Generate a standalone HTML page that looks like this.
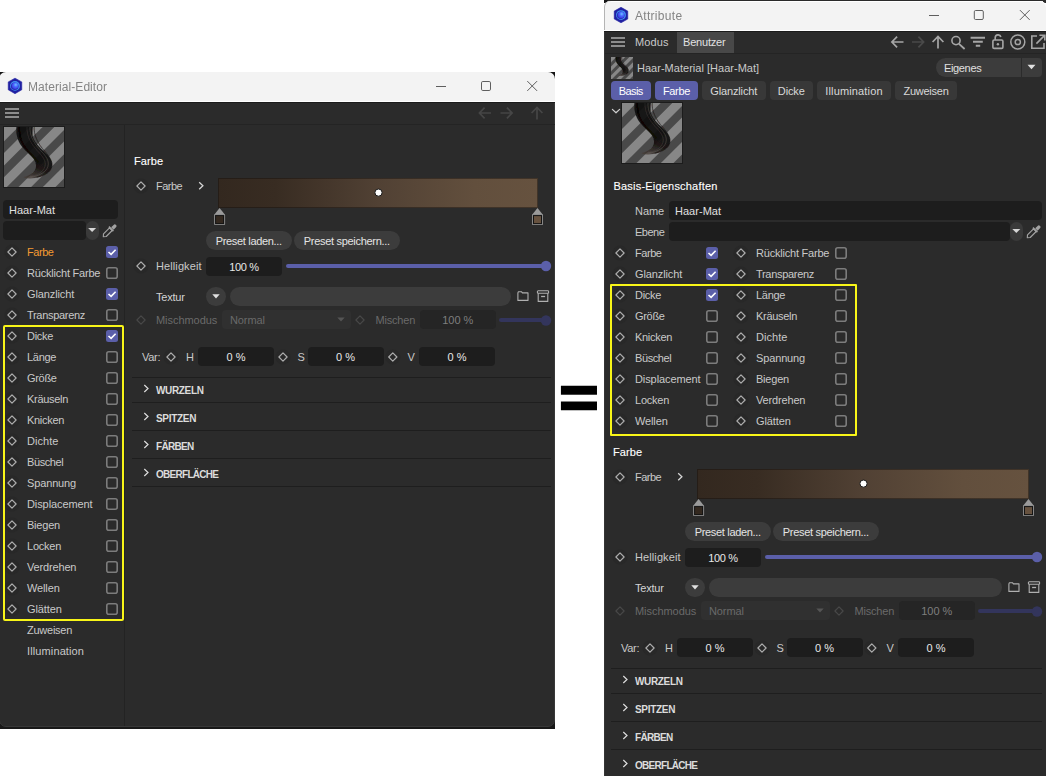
<!DOCTYPE html>
<html lang="de"><head><meta charset="utf-8"><title>Material-Editor = Attribute</title>
<style>
html,body{margin:0;padding:0;background:#fff;}
body{width:1046px;height:776px;position:relative;overflow:hidden;font-family:"Liberation Sans",sans-serif;}
#stage{position:absolute;left:0;top:0;width:1046px;height:776px;overflow:hidden;background:#fff;}
#stage div,#stage svg{position:absolute;display:block;}
.t{white-space:nowrap;}
</style></head><body><div id="stage">
<div style="left:0px;top:72px;width:555px;height:8px;background:#141414;"></div>
<div style="left:0px;top:720px;width:555px;height:9px;background:#181818;"></div>
<div style="left:554px;top:80px;width:1px;height:645px;background:#1c1c1c;"></div>
<div style="left:-1px;top:72px;width:556px;height:655px;background:#2b2b2b;border-radius:7px;box-sizing:border-box;border:1px solid #383838;"></div>
<div style="left:-1px;top:72px;width:556px;height:30px;background:#f3f3f3;border-radius:7px 7px 0 0;"></div>
<svg style="left:7px;top:77px;" width="16" height="18" viewBox="0 0 16 18"><g transform="translate(0 0.4)"><defs><radialGradient id="aga" cx="0.6" cy="0.35" r="0.7"><stop offset="0" stop-color="#6ec4ff"/><stop offset="0.45" stop-color="#4a68ff"/><stop offset="1" stop-color="#3a36e0"/></radialGradient></defs>
<path d="M8 0.75 L14.75 4.55 L14.75 12.45 L8 16.25 L1.25 12.45 L1.25 4.55 Z" fill="#2020a2" stroke="#2020a2" stroke-width="0.6" stroke-linejoin="round"/>
<circle cx="8" cy="8.5" r="4.9" fill="#3f93f2"/>
<circle cx="7.7" cy="8.8" r="3.8" fill="#2a2cb4"/>
<circle cx="8.1" cy="8.4" r="3.2" fill="url(#aga)"/></g></svg>
<div class="t" style="left:28px;top:77.5px;height:18px;line-height:18px;font-size:12px;color:#848484;letter-spacing:0.07px;will-change:transform;">Material-Editor</div>
<div style="left:436px;top:86px;width:10px;height:1px;background:#5e5e5e;"></div>
<svg style="left:480px;top:80px;" width="12" height="12" viewBox="0 0 12 12"><rect x="1.5" y="1.5" width="9" height="9" rx="1.3" fill="none" stroke="#5e5e5e" stroke-width="1"/></svg>
<svg style="left:526px;top:80px;" width="13" height="12" viewBox="0 0 13 12"><g transform="translate(0.2 0)"><path d="M1.1 1.1 L10.9 10.9 M10.9 1.1 L1.1 10.9" fill="none" stroke="#5e5e5e" stroke-width="1"/></g></svg>
<div style="left:0px;top:101px;width:554.5px;height:1px;background:#ffffff;"></div>
<div style="left:0px;top:102px;width:554.5px;height:1px;background:#1b1b1b;"></div>
<div style="left:0px;top:124px;width:554.5px;height:1px;background:#242424;"></div>
<div style="left:5px;top:108px;width:14px;height:2px;background:#8c8c8c;"></div>
<div style="left:5px;top:112px;width:14px;height:2px;background:#8c8c8c;"></div>
<div style="left:5px;top:116px;width:14px;height:2px;background:#8c8c8c;"></div>
<svg style="left:478px;top:106px;" width="14" height="14" viewBox="0 0 14 14"><path d="M13 7 H1.8 M6.6 1.6 L1.4 7 L6.6 12.4" fill="none" stroke="#464646" stroke-width="1.7" stroke-linejoin="miter"/></svg>
<svg style="left:499px;top:106px;" width="15" height="14" viewBox="0 0 15 14"><g transform="translate(0.5 0)"><path d="M1 7 H12.2 M7.4 1.6 L12.6 7 L7.4 12.4" fill="none" stroke="#464646" stroke-width="1.7" stroke-linejoin="miter"/></g></svg>
<svg style="left:530px;top:106px;" width="14" height="14" viewBox="0 0 14 14"><path d="M7 13.5 V2 M1.6 7 L7 1.4 L12.4 7" fill="none" stroke="#464646" stroke-width="1.7" stroke-linejoin="miter"/></svg>
<div style="left:124px;top:125px;width:1px;height:601px;background:#232323;"></div>
<svg style="left:3px;top:126px;" width="62" height="62" viewBox="0 0 62 62"><defs><clipPath id="cpa"><rect x="1" y="1" width="60" height="60"/></clipPath>
<linearGradient id="hga" gradientUnits="userSpaceOnUse" x1="40" y1="22" x2="24" y2="53"><stop offset="0" stop-color="#0e0c0b" stop-opacity="0.92"/><stop offset="0.55" stop-color="#14110f" stop-opacity="0.92"/><stop offset="0.8" stop-color="#2a221e" stop-opacity="0.82"/><stop offset="1" stop-color="#4a3e37" stop-opacity="0.62"/></linearGradient>
<filter id="bla" x="-10%" y="-10%" width="120%" height="120%"><feGaussianBlur stdDeviation="0.45"/></filter></defs>
<rect width="62" height="62" fill="#1c1c1c"/>
<g clip-path="url(#cpa)"><g transform="translate(1 1) scale(1.0)">
<rect width="60" height="60" fill="#878787"/>
<g fill="#4a4a4a" filter="url(#bla)"><path d="M14.3 0 L26.0 0 L0 26.0 L0 14.3 Z"/><path d="M38.6 0 L50.3 0 L0 50.3 L0 38.6 Z"/><path d="M62.900000000000006 0 L74.6 0 L0 74.6 L0 62.900000000000006 Z"/><path d="M87.2 0 L98.9 0 L0 98.9 L0 87.2 Z"/><path d="M111.5 0 L123.2 0 L0 123.2 L0 111.5 Z"/><path d="M135.8 0 L147.5 0 L0 147.5 L0 135.8 Z"/></g>
<g filter="url(#bla)">
<path d="M12.4 -1 C 11.8 7, 13.3 14, 18.3 20 C 22.3 25, 27.8 28.5, 30.3 33 C 32.3 36.5, 32.8 40, 30.8 43.3 C 28.3 46.8, 24.3 49.3, 19.3 50.2 C 23 51.8, 27 51.9, 31 51.1 C 37 49.9, 43 47, 46.3 43 C 49.3 38.5, 48.3 34, 44.8 29.5 C 40.5 24.5, 33 19, 29.5 12 C 28.2 8.5, 28.2 4, 29 -1 Z" fill="url(#hga)"/>
<g fill="none" stroke-linecap="round">
<path d="M26 -1 C 25 10, 31.5 18.5, 38.5 25.5 C 43.5 31, 46 36, 43 41.5 C 40.5 46, 34 49, 27 50.3" stroke="#8a8580" stroke-width="0.55" opacity="0.5"/>
<path d="M23 -1 C 22 10, 28.5 19, 35.5 26 C 40.5 31.5, 43 36.5, 40 41.5 C 37.5 46, 32 48.6, 26 49.8" stroke="#6e6965" stroke-width="0.5" opacity="0.45"/>
<path d="M30.2 -1 C 29.3 8, 34 17, 41 24.5 C 46.5 31, 49.8 36, 47 42 C 44.5 46.5, 39 49, 33 50.2" stroke="#161210" stroke-width="0.8" opacity="0.8"/>
<path d="M15.5 -1 C 14.5 9, 17.5 17, 23.5 23.5 C 27.5 28, 32 31, 34 35" stroke="#000" stroke-width="2.4" opacity="0.5"/>
</g></g></g></g></svg>
<div style="left:3px;top:200px;width:115px;height:19px;background:#1d1d1d;border-radius:4px;"></div>
<div class="t" style="left:9px;top:202.0px;height:16px;line-height:16px;font-size:11px;color:#e0e0e0;letter-spacing:0.03px;">Haar-Mat</div>
<div style="left:86px;top:221px;width:13px;height:19px;background:#3a3a3a;border-radius:6.5px;"></div>
<div style="left:3px;top:221px;width:83px;height:19px;background:#1d1d1d;border-radius:4px;"></div>
<svg style="left:86px;top:226px;" width="13" height="8" viewBox="0 0 13 8"><g transform="translate(0.1 0)"><path d="M2.0 1.9 H10.0 L6 6.1 Z" fill="#d6d6d6"/></g></svg>
<svg style="left:102px;top:223px;" width="15" height="15" viewBox="0 0 15 15"><path d="M1.3 13.7 L1.5 10.8 L7.5 4.8 L10.2 7.5 L4.2 13.5 Z" fill="none" stroke="#a2a2a2" stroke-width="1.15" stroke-linejoin="round"/><path d="M6.9 3.6 L11.4 8.1" stroke="#a2a2a2" stroke-width="1.5"/><path d="M9.2 4.3 L11.6 1.9 a1.65 1.65 0 0 1 2.4 2.4 L11.6 6.7 Z" fill="#a2a2a2"/></svg>
<svg style="left:4px;top:244px;" width="16" height="16" viewBox="0 0 16 16"><circle cx="8" cy="8" r="7.5" fill="#282828"/><path d="M8 3.9 L12.1 8 L8 12.1 L3.9 8 Z" fill="none" stroke="#adadad" stroke-width="1.2" stroke-linejoin="round"/></svg>
<div class="t" style="left:27px;top:244.0px;height:16px;line-height:16px;font-size:11px;color:#f39a32;letter-spacing:-0.45px;">Farbe</div>
<svg style="left:106px;top:246px;" width="12" height="12" viewBox="0 0 12 12"><rect width="12" height="12" rx="2.5" fill="#5b5fa9"/><path d="M2.5 6 L5.1 8.4 L9.6 3.8" fill="none" stroke="#fff" stroke-width="1.6" stroke-linecap="butt" stroke-linejoin="miter"/></svg>
<svg style="left:4px;top:265px;" width="16" height="16" viewBox="0 0 16 16"><circle cx="8" cy="8" r="7.5" fill="#282828"/><path d="M8 3.9 L12.1 8 L8 12.1 L3.9 8 Z" fill="none" stroke="#adadad" stroke-width="1.2" stroke-linejoin="round"/></svg>
<div class="t" style="left:27px;top:265.0px;height:16px;line-height:16px;font-size:11px;color:#c9c9c9;letter-spacing:-0.21px;">Rücklicht Farbe</div>
<svg style="left:106px;top:267px;" width="12" height="12" viewBox="0 0 12 12"><rect x="0.8" y="0.8" width="10.4" height="10.4" rx="2" fill="none" stroke="#7c7c7c" stroke-width="1.6"/></svg>
<svg style="left:4px;top:286px;" width="16" height="16" viewBox="0 0 16 16"><circle cx="8" cy="8" r="7.5" fill="#282828"/><path d="M8 3.9 L12.1 8 L8 12.1 L3.9 8 Z" fill="none" stroke="#adadad" stroke-width="1.2" stroke-linejoin="round"/></svg>
<div class="t" style="left:27px;top:286.0px;height:16px;line-height:16px;font-size:11px;color:#c9c9c9;letter-spacing:-0.12px;">Glanzlicht</div>
<svg style="left:106px;top:288px;" width="12" height="12" viewBox="0 0 12 12"><rect width="12" height="12" rx="2.5" fill="#5b5fa9"/><path d="M2.5 6 L5.1 8.4 L9.6 3.8" fill="none" stroke="#fff" stroke-width="1.6" stroke-linecap="butt" stroke-linejoin="miter"/></svg>
<svg style="left:4px;top:307px;" width="16" height="16" viewBox="0 0 16 16"><circle cx="8" cy="8" r="7.5" fill="#282828"/><path d="M8 3.9 L12.1 8 L8 12.1 L3.9 8 Z" fill="none" stroke="#adadad" stroke-width="1.2" stroke-linejoin="round"/></svg>
<div class="t" style="left:27px;top:307.0px;height:16px;line-height:16px;font-size:11px;color:#c9c9c9;letter-spacing:-0.3px;">Transparenz</div>
<svg style="left:106px;top:309px;" width="12" height="12" viewBox="0 0 12 12"><rect x="0.8" y="0.8" width="10.4" height="10.4" rx="2" fill="none" stroke="#7c7c7c" stroke-width="1.6"/></svg>
<svg style="left:4px;top:328px;" width="16" height="16" viewBox="0 0 16 16"><circle cx="8" cy="8" r="7.5" fill="#282828"/><path d="M8 3.9 L12.1 8 L8 12.1 L3.9 8 Z" fill="none" stroke="#adadad" stroke-width="1.2" stroke-linejoin="round"/></svg>
<div class="t" style="left:27px;top:328.0px;height:16px;line-height:16px;font-size:11px;color:#c9c9c9;letter-spacing:-0.3px;">Dicke</div>
<svg style="left:106px;top:330px;" width="12" height="12" viewBox="0 0 12 12"><rect width="12" height="12" rx="2.5" fill="#5b5fa9"/><path d="M2.5 6 L5.1 8.4 L9.6 3.8" fill="none" stroke="#fff" stroke-width="1.6" stroke-linecap="butt" stroke-linejoin="miter"/></svg>
<svg style="left:4px;top:349px;" width="16" height="16" viewBox="0 0 16 16"><circle cx="8" cy="8" r="7.5" fill="#282828"/><path d="M8 3.9 L12.1 8 L8 12.1 L3.9 8 Z" fill="none" stroke="#adadad" stroke-width="1.2" stroke-linejoin="round"/></svg>
<div class="t" style="left:27px;top:349.0px;height:16px;line-height:16px;font-size:11px;color:#c9c9c9;letter-spacing:-0.3px;">Länge</div>
<svg style="left:106px;top:351px;" width="12" height="12" viewBox="0 0 12 12"><rect x="0.8" y="0.8" width="10.4" height="10.4" rx="2" fill="none" stroke="#7c7c7c" stroke-width="1.6"/></svg>
<svg style="left:4px;top:370px;" width="16" height="16" viewBox="0 0 16 16"><circle cx="8" cy="8" r="7.5" fill="#282828"/><path d="M8 3.9 L12.1 8 L8 12.1 L3.9 8 Z" fill="none" stroke="#adadad" stroke-width="1.2" stroke-linejoin="round"/></svg>
<div class="t" style="left:27px;top:370.0px;height:16px;line-height:16px;font-size:11px;color:#c9c9c9;letter-spacing:-0.3px;">Größe</div>
<svg style="left:106px;top:372px;" width="12" height="12" viewBox="0 0 12 12"><rect x="0.8" y="0.8" width="10.4" height="10.4" rx="2" fill="none" stroke="#7c7c7c" stroke-width="1.6"/></svg>
<svg style="left:4px;top:391px;" width="16" height="16" viewBox="0 0 16 16"><circle cx="8" cy="8" r="7.5" fill="#282828"/><path d="M8 3.9 L12.1 8 L8 12.1 L3.9 8 Z" fill="none" stroke="#adadad" stroke-width="1.2" stroke-linejoin="round"/></svg>
<div class="t" style="left:27px;top:391.0px;height:16px;line-height:16px;font-size:11px;color:#c9c9c9;letter-spacing:-0.3px;">Kräuseln</div>
<svg style="left:106px;top:393px;" width="12" height="12" viewBox="0 0 12 12"><rect x="0.8" y="0.8" width="10.4" height="10.4" rx="2" fill="none" stroke="#7c7c7c" stroke-width="1.6"/></svg>
<svg style="left:4px;top:412px;" width="16" height="16" viewBox="0 0 16 16"><circle cx="8" cy="8" r="7.5" fill="#282828"/><path d="M8 3.9 L12.1 8 L8 12.1 L3.9 8 Z" fill="none" stroke="#adadad" stroke-width="1.2" stroke-linejoin="round"/></svg>
<div class="t" style="left:27px;top:412.0px;height:16px;line-height:16px;font-size:11px;color:#c9c9c9;letter-spacing:-0.3px;">Knicken</div>
<svg style="left:106px;top:414px;" width="12" height="12" viewBox="0 0 12 12"><rect x="0.8" y="0.8" width="10.4" height="10.4" rx="2" fill="none" stroke="#7c7c7c" stroke-width="1.6"/></svg>
<svg style="left:4px;top:433px;" width="16" height="16" viewBox="0 0 16 16"><circle cx="8" cy="8" r="7.5" fill="#282828"/><path d="M8 3.9 L12.1 8 L8 12.1 L3.9 8 Z" fill="none" stroke="#adadad" stroke-width="1.2" stroke-linejoin="round"/></svg>
<div class="t" style="left:27px;top:433.0px;height:16px;line-height:16px;font-size:11px;color:#c9c9c9;letter-spacing:0.03px;">Dichte</div>
<svg style="left:106px;top:435px;" width="12" height="12" viewBox="0 0 12 12"><rect x="0.8" y="0.8" width="10.4" height="10.4" rx="2" fill="none" stroke="#7c7c7c" stroke-width="1.6"/></svg>
<svg style="left:4px;top:454px;" width="16" height="16" viewBox="0 0 16 16"><circle cx="8" cy="8" r="7.5" fill="#282828"/><path d="M8 3.9 L12.1 8 L8 12.1 L3.9 8 Z" fill="none" stroke="#adadad" stroke-width="1.2" stroke-linejoin="round"/></svg>
<div class="t" style="left:27px;top:454.0px;height:16px;line-height:16px;font-size:11px;color:#c9c9c9;letter-spacing:-0.4px;">Büschel</div>
<svg style="left:106px;top:456px;" width="12" height="12" viewBox="0 0 12 12"><rect x="0.8" y="0.8" width="10.4" height="10.4" rx="2" fill="none" stroke="#7c7c7c" stroke-width="1.6"/></svg>
<svg style="left:4px;top:475px;" width="16" height="16" viewBox="0 0 16 16"><circle cx="8" cy="8" r="7.5" fill="#282828"/><path d="M8 3.9 L12.1 8 L8 12.1 L3.9 8 Z" fill="none" stroke="#adadad" stroke-width="1.2" stroke-linejoin="round"/></svg>
<div class="t" style="left:27px;top:475.0px;height:16px;line-height:16px;font-size:11px;color:#c9c9c9;letter-spacing:-0.14px;">Spannung</div>
<svg style="left:106px;top:477px;" width="12" height="12" viewBox="0 0 12 12"><rect x="0.8" y="0.8" width="10.4" height="10.4" rx="2" fill="none" stroke="#7c7c7c" stroke-width="1.6"/></svg>
<svg style="left:4px;top:496px;" width="16" height="16" viewBox="0 0 16 16"><circle cx="8" cy="8" r="7.5" fill="#282828"/><path d="M8 3.9 L12.1 8 L8 12.1 L3.9 8 Z" fill="none" stroke="#adadad" stroke-width="1.2" stroke-linejoin="round"/></svg>
<div class="t" style="left:27px;top:496.0px;height:16px;line-height:16px;font-size:11px;color:#c9c9c9;letter-spacing:-0.09px;">Displacement</div>
<svg style="left:106px;top:498px;" width="12" height="12" viewBox="0 0 12 12"><rect x="0.8" y="0.8" width="10.4" height="10.4" rx="2" fill="none" stroke="#7c7c7c" stroke-width="1.6"/></svg>
<svg style="left:4px;top:517px;" width="16" height="16" viewBox="0 0 16 16"><circle cx="8" cy="8" r="7.5" fill="#282828"/><path d="M8 3.9 L12.1 8 L8 12.1 L3.9 8 Z" fill="none" stroke="#adadad" stroke-width="1.2" stroke-linejoin="round"/></svg>
<div class="t" style="left:27px;top:517.0px;height:16px;line-height:16px;font-size:11px;color:#c9c9c9;letter-spacing:-0.22px;">Biegen</div>
<svg style="left:106px;top:519px;" width="12" height="12" viewBox="0 0 12 12"><rect x="0.8" y="0.8" width="10.4" height="10.4" rx="2" fill="none" stroke="#7c7c7c" stroke-width="1.6"/></svg>
<svg style="left:4px;top:538px;" width="16" height="16" viewBox="0 0 16 16"><circle cx="8" cy="8" r="7.5" fill="#282828"/><path d="M8 3.9 L12.1 8 L8 12.1 L3.9 8 Z" fill="none" stroke="#adadad" stroke-width="1.2" stroke-linejoin="round"/></svg>
<div class="t" style="left:27px;top:538.0px;height:16px;line-height:16px;font-size:11px;color:#c9c9c9;letter-spacing:-0.22px;">Locken</div>
<svg style="left:106px;top:540px;" width="12" height="12" viewBox="0 0 12 12"><rect x="0.8" y="0.8" width="10.4" height="10.4" rx="2" fill="none" stroke="#7c7c7c" stroke-width="1.6"/></svg>
<svg style="left:4px;top:559px;" width="16" height="16" viewBox="0 0 16 16"><circle cx="8" cy="8" r="7.5" fill="#282828"/><path d="M8 3.9 L12.1 8 L8 12.1 L3.9 8 Z" fill="none" stroke="#adadad" stroke-width="1.2" stroke-linejoin="round"/></svg>
<div class="t" style="left:27px;top:559.0px;height:16px;line-height:16px;font-size:11px;color:#c9c9c9;letter-spacing:-0.16px;">Verdrehen</div>
<svg style="left:106px;top:561px;" width="12" height="12" viewBox="0 0 12 12"><rect x="0.8" y="0.8" width="10.4" height="10.4" rx="2" fill="none" stroke="#7c7c7c" stroke-width="1.6"/></svg>
<svg style="left:4px;top:580px;" width="16" height="16" viewBox="0 0 16 16"><circle cx="8" cy="8" r="7.5" fill="#282828"/><path d="M8 3.9 L12.1 8 L8 12.1 L3.9 8 Z" fill="none" stroke="#adadad" stroke-width="1.2" stroke-linejoin="round"/></svg>
<div class="t" style="left:27px;top:580.0px;height:16px;line-height:16px;font-size:11px;color:#c9c9c9;letter-spacing:-0.13px;">Wellen</div>
<svg style="left:106px;top:582px;" width="12" height="12" viewBox="0 0 12 12"><rect x="0.8" y="0.8" width="10.4" height="10.4" rx="2" fill="none" stroke="#7c7c7c" stroke-width="1.6"/></svg>
<svg style="left:4px;top:601px;" width="16" height="16" viewBox="0 0 16 16"><circle cx="8" cy="8" r="7.5" fill="#282828"/><path d="M8 3.9 L12.1 8 L8 12.1 L3.9 8 Z" fill="none" stroke="#adadad" stroke-width="1.2" stroke-linejoin="round"/></svg>
<div class="t" style="left:27px;top:601.0px;height:16px;line-height:16px;font-size:11px;color:#c9c9c9;letter-spacing:-0.09px;">Glätten</div>
<svg style="left:106px;top:603px;" width="12" height="12" viewBox="0 0 12 12"><rect x="0.8" y="0.8" width="10.4" height="10.4" rx="2" fill="none" stroke="#7c7c7c" stroke-width="1.6"/></svg>
<div class="t" style="left:27px;top:622.0px;height:16px;line-height:16px;font-size:11px;color:#c9c9c9;letter-spacing:-0.25px;">Zuweisen</div>
<div class="t" style="left:27px;top:643.0px;height:16px;line-height:16px;font-size:11px;color:#c9c9c9;letter-spacing:0.12px;">Illumination</div>
<div style="left:3px;top:325px;width:117px;height:292px;border:2px solid #f8f518;border-radius:2px;"></div>
<div class="t" style="left:134px;top:153.0px;height:16px;line-height:16px;font-size:11px;color:#ffffff;letter-spacing:0.1px;-webkit-text-stroke:0.12px #fff;">Farbe</div>
<svg style="left:133px;top:178px;" width="16" height="16" viewBox="0 0 16 16"><circle cx="8" cy="8" r="7.5" fill="#282828"/><path d="M8 3.9 L12.1 8 L8 12.1 L3.9 8 Z" fill="none" stroke="#adadad" stroke-width="1.2" stroke-linejoin="round"/></svg>
<div class="t" style="left:156px;top:178.0px;height:16px;line-height:16px;font-size:11px;color:#c9c9c9;letter-spacing:-0.5px;">Farbe</div>
<svg style="left:197px;top:180px;" width="9" height="11" viewBox="0 0 9 11"><g transform="translate(0.1 0.8)"><path d="M2.1 1.5 L5.8 5 L2.1 8.5" fill="none" stroke="#d6d6d6" stroke-width="1.3" stroke-linecap="butt" stroke-linejoin="miter"/></g></svg>
<div style="left:218px;top:178px;width:320px;height:30px;background:linear-gradient(90deg,#33281f 0%,#382c22 18%,#514134 50%,#624f3d 80%,#66523f 100%);box-shadow:inset 0 0 0 1px rgba(20,16,14,0.45);"></div>
<svg style="left:373px;top:187px;" width="11" height="11" viewBox="0 0 11 11"><g transform="translate(0.5 0.6)"><circle cx="5" cy="5" r="3.6" fill="#fff" stroke="#1a1a1a" stroke-width="1"/></g></svg>
<svg style="left:213px;top:207px;" width="13" height="19" viewBox="0 0 13 19"><g transform="translate(0.6 0.8)"><path d="M6 0.3 L11.2 6.6 H0.8 Z" fill="#9a9a9a"/><rect x="0.5" y="6.3" width="11" height="11" rx="0.8" fill="#8e8e8e"/><rect x="1.45" y="7.25" width="9.1" height="9.1" fill="#141414"/><rect x="2.5" y="8.3" width="7" height="7" fill="#33281f"/></g></svg>
<svg style="left:531px;top:207px;" width="13" height="19" viewBox="0 0 13 19"><g transform="translate(0.5 0.8)"><path d="M6 0.3 L11.2 6.6 H0.8 Z" fill="#9a9a9a"/><rect x="0.5" y="6.3" width="11" height="11" rx="0.8" fill="#8e8e8e"/><rect x="1.45" y="7.25" width="9.1" height="9.1" fill="#141414"/><rect x="2.5" y="8.3" width="7" height="7" fill="#67523f"/></g></svg>
<div style="left:206px;top:231px;width:85.5px;height:19px;background:#3c3c3c;border-radius:9.5px;"></div>
<div class="t" style="left:206px;top:232.5px;height:16px;line-height:16px;font-size:11px;color:#e4e4e4;letter-spacing:-0.32px;width:85.5px;text-align:center;">Preset laden...</div>
<div style="left:294px;top:231px;width:105.5px;height:19px;background:#3c3c3c;border-radius:9.5px;"></div>
<div class="t" style="left:294px;top:232.5px;height:16px;line-height:16px;font-size:11px;color:#e4e4e4;letter-spacing:-0.3px;width:105.5px;text-align:center;">Preset speichern...</div>
<svg style="left:133px;top:258px;" width="16" height="16" viewBox="0 0 16 16"><circle cx="8" cy="8" r="7.5" fill="#282828"/><path d="M8 3.9 L12.1 8 L8 12.1 L3.9 8 Z" fill="none" stroke="#adadad" stroke-width="1.2" stroke-linejoin="round"/></svg>
<div class="t" style="left:156px;top:258.0px;height:16px;line-height:16px;font-size:11px;color:#c9c9c9;letter-spacing:0.1px;">Helligkeit</div>
<div style="left:206px;top:257px;width:76px;height:19px;background:#1d1d1d;border-radius:4px;"></div>
<div class="t" style="left:206px;top:259.0px;height:16px;line-height:16px;font-size:11px;color:#e8e8e8;letter-spacing:-0.3px;width:76px;text-align:center;">100 %</div>
<div style="left:286px;top:263.5px;width:260px;height:4px;background:#5b5fa9;border-radius:2px;"></div>
<svg style="left:540px;top:260px;" width="12" height="12" viewBox="0 0 12 12"><g transform="translate(0.5 0.5)"><circle cx="5.5" cy="5.5" r="5.2" fill="#5b5fa9"/></g></svg>
<div class="t" style="left:156px;top:289.0px;height:16px;line-height:16px;font-size:11px;color:#d4d4d4;letter-spacing:-0.2px;">Textur</div>
<div style="left:206px;top:287px;width:20px;height:19px;background:#3c3c3c;border-radius:9.5px;"></div>
<svg style="left:210px;top:292px;" width="12" height="9" viewBox="0 0 12 9"><g transform="translate(0 0.3)"><path d="M2.3 1.9 H9.7 L6 6.1 Z" fill="#e0e0e0"/></g></svg>
<div style="left:230px;top:287px;width:280.5px;height:19px;background:#3c3c3c;border-radius:9.5px;"></div>
<svg style="left:515px;top:290px;" width="15" height="12" viewBox="0 0 15 12"><g transform="translate(0.5 0)"><path d="M2.4 2.9 V10.4 H12.5 V2.9 H6.9 L5.9 1.7 H2.9 L2.4 2.9 Z" fill="none" stroke="#b0b0b0" stroke-width="1.1" stroke-linejoin="round"/></g></svg>
<svg style="left:536px;top:289px;" width="14" height="14" viewBox="0 0 14 14"><g transform="translate(0.5 0.5)"><path d="M1.7 3.8 V11.9 H11.3 V3.8" fill="none" stroke="#b0b0b0" stroke-width="1.1" stroke-linejoin="round"/><rect x="0.9" y="1.3" width="11.2" height="2.5" rx="0.8" fill="none" stroke="#b0b0b0" stroke-width="1.1"/><path d="M4.6 7 H8.6" stroke="#b0b0b0" stroke-width="1.3"/></g></svg>
<svg style="left:133px;top:312px;" width="16" height="16" viewBox="0 0 16 16"><path d="M8 3.9 L12.1 8 L8 12.1 L3.9 8 Z" fill="none" stroke="#484848" stroke-width="1.2" stroke-linejoin="round"/></svg>
<div class="t" style="left:156px;top:312.0px;height:16px;line-height:16px;font-size:11px;color:#6a6a6a;letter-spacing:-0.05px;">Mischmodus</div>
<div style="left:222px;top:310px;width:129px;height:19px;background:#303030;border-radius:4px;"></div>
<div class="t" style="left:230px;top:312.0px;height:16px;line-height:16px;font-size:11px;color:#6a6a6a;letter-spacing:-0.1px;">Normal</div>
<svg style="left:335px;top:315px;" width="12" height="9" viewBox="0 0 12 9"><g transform="translate(0 0.5)"><path d="M2.3 1.9 H9.7 L6 6.1 Z" fill="#555555"/></g></svg>
<svg style="left:352px;top:312px;" width="16" height="16" viewBox="0 0 16 16"><path d="M8 3.9 L12.1 8 L8 12.1 L3.9 8 Z" fill="none" stroke="#484848" stroke-width="1.2" stroke-linejoin="round"/></svg>
<div class="t" style="left:375.5px;top:312.0px;height:16px;line-height:16px;font-size:11px;color:#6a6a6a;letter-spacing:-0.2px;">Mischen</div>
<div style="left:420px;top:310px;width:75.5px;height:19px;background:#252525;border-radius:4px;"></div>
<div class="t" style="left:420px;top:312.0px;height:16px;line-height:16px;font-size:11px;color:#7e7e7e;width:75.5px;text-align:center;">100 %</div>
<div style="left:499px;top:318px;width:47px;height:4px;background:#33355c;border-radius:2px;"></div>
<svg style="left:540px;top:315px;" width="12" height="11" viewBox="0 0 12 11"><g transform="translate(0.5 0)"><circle cx="5.5" cy="5.5" r="5.2" fill="#33355c"/></g></svg>
<div class="t" style="left:142px;top:349.0px;height:16px;line-height:16px;font-size:11px;color:#c9c9c9;letter-spacing:-0.3px;">Var:</div>
<svg style="left:163px;top:349px;" width="16" height="16" viewBox="0 0 16 16"><circle cx="8" cy="8" r="7.5" fill="#282828"/><path d="M8 3.9 L12.1 8 L8 12.1 L3.9 8 Z" fill="none" stroke="#adadad" stroke-width="1.2" stroke-linejoin="round"/></svg>
<div class="t" style="left:186px;top:349.0px;height:16px;line-height:16px;font-size:11px;color:#c9c9c9;">H</div>
<div style="left:198px;top:347px;width:76px;height:19px;background:#1d1d1d;border-radius:4px;"></div>
<div class="t" style="left:198px;top:349.0px;height:16px;line-height:16px;font-size:11px;color:#e8e8e8;width:76px;text-align:center;">0 %</div>
<svg style="left:275px;top:349px;" width="16" height="16" viewBox="0 0 16 16"><circle cx="8" cy="8" r="7.5" fill="#282828"/><path d="M8 3.9 L12.1 8 L8 12.1 L3.9 8 Z" fill="none" stroke="#adadad" stroke-width="1.2" stroke-linejoin="round"/></svg>
<div class="t" style="left:297.5px;top:349.0px;height:16px;line-height:16px;font-size:11px;color:#c9c9c9;">S</div>
<div style="left:307.5px;top:347px;width:76px;height:19px;background:#1d1d1d;border-radius:4px;"></div>
<div class="t" style="left:307.5px;top:349.0px;height:16px;line-height:16px;font-size:11px;color:#e8e8e8;width:76px;text-align:center;">0 %</div>
<svg style="left:384px;top:349px;" width="17" height="16" viewBox="0 0 17 16"><g transform="translate(0.8 0)"><circle cx="8" cy="8" r="7.5" fill="#282828"/><path d="M8 3.9 L12.1 8 L8 12.1 L3.9 8 Z" fill="none" stroke="#adadad" stroke-width="1.2" stroke-linejoin="round"/></g></svg>
<div class="t" style="left:407.5px;top:349.0px;height:16px;line-height:16px;font-size:11px;color:#c9c9c9;">V</div>
<div style="left:419px;top:347px;width:76px;height:19px;background:#1d1d1d;border-radius:4px;"></div>
<div class="t" style="left:419px;top:349.0px;height:16px;line-height:16px;font-size:11px;color:#e8e8e8;width:76px;text-align:center;">0 %</div>
<div style="left:132px;top:377px;width:419px;height:1px;background:#1e1e1e;"></div>
<div style="left:132px;top:402px;width:419px;height:1px;background:#1e1e1e;"></div>
<div style="left:132px;top:430px;width:419px;height:1px;background:#1e1e1e;"></div>
<div style="left:132px;top:458px;width:419px;height:1px;background:#1e1e1e;"></div>
<div style="left:132px;top:486px;width:419px;height:1px;background:#1e1e1e;"></div>
<svg style="left:142px;top:383px;" width="9" height="11" viewBox="0 0 9 11"><g transform="translate(0.2 0.5)"><path d="M2.1 1.5 L5.8 5 L2.1 8.5" fill="none" stroke="#dedede" stroke-width="1.2" stroke-linecap="butt" stroke-linejoin="miter"/></g></svg>
<div class="t" style="left:156px;top:383.0px;height:16px;line-height:16px;font-size:10px;color:#dcdcdc;font-weight:700;letter-spacing:-0.35px;">WURZELN</div>
<svg style="left:142px;top:411px;" width="9" height="11" viewBox="0 0 9 11"><g transform="translate(0.2 0.5)"><path d="M2.1 1.5 L5.8 5 L2.1 8.5" fill="none" stroke="#dedede" stroke-width="1.2" stroke-linecap="butt" stroke-linejoin="miter"/></g></svg>
<div class="t" style="left:156px;top:411.0px;height:16px;line-height:16px;font-size:10px;color:#dcdcdc;font-weight:700;letter-spacing:-0.3px;">SPITZEN</div>
<svg style="left:142px;top:439px;" width="9" height="11" viewBox="0 0 9 11"><g transform="translate(0.2 0.5)"><path d="M2.1 1.5 L5.8 5 L2.1 8.5" fill="none" stroke="#dedede" stroke-width="1.2" stroke-linecap="butt" stroke-linejoin="miter"/></g></svg>
<div class="t" style="left:156px;top:439.0px;height:16px;line-height:16px;font-size:10px;color:#dcdcdc;font-weight:700;letter-spacing:-0.67px;">FÄRBEN</div>
<svg style="left:142px;top:467px;" width="9" height="11" viewBox="0 0 9 11"><g transform="translate(0.2 0.5)"><path d="M2.1 1.5 L5.8 5 L2.1 8.5" fill="none" stroke="#dedede" stroke-width="1.2" stroke-linecap="butt" stroke-linejoin="miter"/></g></svg>
<div class="t" style="left:156px;top:467.0px;height:16px;line-height:16px;font-size:10px;color:#dcdcdc;font-weight:700;letter-spacing:-0.72px;">OBERFLÄCHE</div>
<div class="t" style="left:561.3px;top:385px;width:36px;height:24px;line-height:24px;font-size:57.5px;font-weight:700;color:#000;text-align:center;-webkit-text-stroke:2.74px #000;transform:scaleX(1.143);transform-origin:50% 50%;">=</div>
<div style="left:604px;top:0px;width:442px;height:776px;background:#2b2b2b;"></div>
<div style="left:604px;top:0px;width:442px;height:8px;background:#ffffff;"></div>
<div style="left:604px;top:0px;width:442px;height:1px;background:#2a2a2a;"></div>
<div style="left:604px;top:0px;width:4px;height:3px;background:#161616;"></div>
<div style="left:1043px;top:0px;width:3px;height:3px;background:#2a2a2a;"></div>
<div style="left:604px;top:1px;width:442px;height:29px;background:#f3f3f3;border-radius:6px 6px 0 0;box-shadow:inset 1px 0 0 #b4b4b4, inset 0 1px 0 #ffffff;"></div>
<svg style="left:613px;top:6px;" width="16" height="18" viewBox="0 0 16 18"><g transform="translate(0 0.55)"><defs><radialGradient id="agb" cx="0.6" cy="0.35" r="0.7"><stop offset="0" stop-color="#6ec4ff"/><stop offset="0.45" stop-color="#4a68ff"/><stop offset="1" stop-color="#3a36e0"/></radialGradient></defs>
<path d="M8 0.75 L14.75 4.55 L14.75 12.45 L8 16.25 L1.25 12.45 L1.25 4.55 Z" fill="#2020a2" stroke="#2020a2" stroke-width="0.6" stroke-linejoin="round"/>
<circle cx="8" cy="8.5" r="4.9" fill="#3f93f2"/>
<circle cx="7.7" cy="8.8" r="3.8" fill="#2a2cb4"/>
<circle cx="8.1" cy="8.4" r="3.2" fill="url(#agb)"/></g></svg>
<div class="t" style="left:635px;top:6.5px;height:18px;line-height:18px;font-size:12px;color:#848484;letter-spacing:0.3px;will-change:transform;">Attribute</div>
<div style="left:929px;top:15px;width:10px;height:1px;background:#5e5e5e;"></div>
<svg style="left:972px;top:9px;" width="13" height="12" viewBox="0 0 13 12"><g transform="translate(0.8 0)"><rect x="1.5" y="1.5" width="9" height="9" rx="1.3" fill="none" stroke="#5e5e5e" stroke-width="1"/></g></svg>
<svg style="left:1018px;top:9px;" width="13" height="12" viewBox="0 0 13 12"><g transform="translate(0.8 0)"><path d="M1.1 1.1 L10.9 10.9 M10.9 1.1 L1.1 10.9" fill="none" stroke="#5e5e5e" stroke-width="1"/></g></svg>
<div style="left:604px;top:30px;width:442px;height:1px;background:#ffffff;"></div>
<div style="left:604px;top:31px;width:442px;height:1px;background:#1b1b1b;"></div>
<div style="left:604px;top:53px;width:442px;height:1px;background:#242424;"></div>
<div style="left:604px;top:32px;width:1px;height:744px;background:#353535;"></div>
<div style="left:611px;top:37px;width:14px;height:2px;background:#8c8c8c;"></div>
<div style="left:611px;top:41px;width:14px;height:2px;background:#8c8c8c;"></div>
<div style="left:611px;top:45px;width:14px;height:2px;background:#8c8c8c;"></div>
<div class="t" style="left:635px;top:34.0px;height:16px;line-height:16px;font-size:11px;color:#c9c9c9;letter-spacing:0.1px;">Modus</div>
<div style="left:677px;top:32px;width:57px;height:21px;background:#484848;"></div>
<div class="t" style="left:683px;top:34.0px;height:16px;line-height:16px;font-size:11px;color:#e2e2e2;letter-spacing:-0.2px;">Benutzer</div>
<svg style="left:890px;top:35px;" width="15" height="14" viewBox="0 0 15 14"><g transform="translate(0.5 0)"><path d="M13 7 H1.8 M6.6 1.6 L1.4 7 L6.6 12.4" fill="none" stroke="#a6a6a6" stroke-width="1.7" stroke-linejoin="miter"/></g></svg>
<svg style="left:911px;top:35px;" width="14" height="14" viewBox="0 0 14 14"><path d="M1 7 H12.2 M7.4 1.6 L12.6 7 L7.4 12.4" fill="none" stroke="#4a4a4a" stroke-width="1.7" stroke-linejoin="miter"/></svg>
<svg style="left:931px;top:35px;" width="14" height="14" viewBox="0 0 14 14"><path d="M7 13.5 V2 M1.6 7 L7 1.4 L12.4 7" fill="none" stroke="#a6a6a6" stroke-width="1.7" stroke-linejoin="miter"/></svg>
<svg style="left:949px;top:34px;" width="18" height="16" viewBox="0 0 18 16"><circle cx="7" cy="6.6" r="4.1" fill="none" stroke="#a6a6a6" stroke-width="1.6"/><path d="M10 9.8 L15.6 15" stroke="#a6a6a6" stroke-width="1.8"/></svg>
<svg style="left:969px;top:35px;" width="18" height="14" viewBox="0 0 18 14"><path d="M1.6 2.8 H16 M4 6.8 H13.8 M6.8 10.8 H11.2" stroke="#a6a6a6" stroke-width="1.9"/></svg>
<svg style="left:990px;top:33px;" width="16" height="17" viewBox="0 0 16 17"><rect x="2.9" y="7" width="10" height="8.4" rx="1.2" fill="none" stroke="#a6a6a6" stroke-width="1.6"/><path d="M5.2 7 V4.6 a2.9 2.9 0 0 1 5.7 -0.6" fill="none" stroke="#a6a6a6" stroke-width="1.6"/><circle cx="7.9" cy="11.2" r="1.2" fill="#a6a6a6"/></svg>
<svg style="left:1009px;top:33px;" width="18" height="18" viewBox="0 0 18 18"><circle cx="8.8" cy="9" r="7" fill="none" stroke="#a6a6a6" stroke-width="1.5"/><circle cx="8.8" cy="9" r="2.6" fill="none" stroke="#a6a6a6" stroke-width="1.5"/></svg>
<svg style="left:1030px;top:34px;" width="16" height="16" viewBox="0 0 16 16"><path d="M7 2 H1.8 V14.2 H14 V9" fill="none" stroke="#a6a6a6" stroke-width="1.6"/><path d="M6.4 9.6 L14.6 1.4 M9.4 1.2 H14.8 V6.6" fill="none" stroke="#a6a6a6" stroke-width="1.6"/></svg>
<svg style="left:611px;top:57px;" width="22" height="22" viewBox="0 0 22 22"><defs><clipPath id="cpc"><rect x="0" y="0" width="22" height="22"/></clipPath>
<linearGradient id="hgc" gradientUnits="userSpaceOnUse" x1="40" y1="22" x2="24" y2="53"><stop offset="0" stop-color="#0e0c0b" stop-opacity="0.92"/><stop offset="0.55" stop-color="#14110f" stop-opacity="0.92"/><stop offset="0.8" stop-color="#2a221e" stop-opacity="0.82"/><stop offset="1" stop-color="#4a3e37" stop-opacity="0.62"/></linearGradient>
<filter id="blc" x="-10%" y="-10%" width="120%" height="120%"><feGaussianBlur stdDeviation="0.45"/></filter></defs>

<g clip-path="url(#cpc)"><g transform="translate(0 0) scale(0.36666666666666664)">
<rect width="60" height="60" fill="#878787"/>
<g fill="#4a4a4a" filter="url(#blc)"><path d="M14.3 0 L26.0 0 L0 26.0 L0 14.3 Z"/><path d="M38.6 0 L50.3 0 L0 50.3 L0 38.6 Z"/><path d="M62.900000000000006 0 L74.6 0 L0 74.6 L0 62.900000000000006 Z"/><path d="M87.2 0 L98.9 0 L0 98.9 L0 87.2 Z"/><path d="M111.5 0 L123.2 0 L0 123.2 L0 111.5 Z"/><path d="M135.8 0 L147.5 0 L0 147.5 L0 135.8 Z"/></g>
<g filter="url(#blc)">
<path d="M12.4 -1 C 11.8 7, 13.3 14, 18.3 20 C 22.3 25, 27.8 28.5, 30.3 33 C 32.3 36.5, 32.8 40, 30.8 43.3 C 28.3 46.8, 24.3 49.3, 19.3 50.2 C 23 51.8, 27 51.9, 31 51.1 C 37 49.9, 43 47, 46.3 43 C 49.3 38.5, 48.3 34, 44.8 29.5 C 40.5 24.5, 33 19, 29.5 12 C 28.2 8.5, 28.2 4, 29 -1 Z" fill="url(#hgc)"/>
<g fill="none" stroke-linecap="round">
<path d="M26 -1 C 25 10, 31.5 18.5, 38.5 25.5 C 43.5 31, 46 36, 43 41.5 C 40.5 46, 34 49, 27 50.3" stroke="#8a8580" stroke-width="0.55" opacity="0.5"/>
<path d="M23 -1 C 22 10, 28.5 19, 35.5 26 C 40.5 31.5, 43 36.5, 40 41.5 C 37.5 46, 32 48.6, 26 49.8" stroke="#6e6965" stroke-width="0.5" opacity="0.45"/>
<path d="M30.2 -1 C 29.3 8, 34 17, 41 24.5 C 46.5 31, 49.8 36, 47 42 C 44.5 46.5, 39 49, 33 50.2" stroke="#161210" stroke-width="0.8" opacity="0.8"/>
<path d="M15.5 -1 C 14.5 9, 17.5 17, 23.5 23.5 C 27.5 28, 32 31, 34 35" stroke="#000" stroke-width="2.4" opacity="0.5"/>
</g></g></g></g></svg>
<div class="t" style="left:637px;top:60.0px;height:16px;line-height:16px;font-size:11px;color:#c9c9c9;letter-spacing:0.02px;">Haar-Material [Haar-Mat]</div>
<div style="left:936px;top:58px;width:106px;height:19px;background:#3c3c3c;border-radius:9.5px 4px 4px 9.5px;"></div>
<div style="left:1020.5px;top:58px;width:1px;height:19px;background:#2b2b2b;"></div>
<div class="t" style="left:944px;top:59.5px;height:16px;line-height:16px;font-size:11px;color:#e0e0e0;letter-spacing:-0.35px;">Eigenes</div>
<svg style="left:1025px;top:63px;" width="13" height="8" viewBox="0 0 13 8"><g transform="translate(0.5 0)"><path d="M2.0 1.75 H10.0 L6 6.25 Z" fill="#e0e0e0"/></g></svg>
<div style="left:611px;top:81px;width:39.5px;height:19px;background:#5b5fa9;border-radius:4px;"></div>
<div class="t" style="left:611px;top:82.5px;height:16px;line-height:16px;font-size:11px;color:#ffffff;letter-spacing:-0.6px;width:39.5px;text-align:center;">Basis</div>
<div style="left:655px;top:81px;width:43px;height:19px;background:#5b5fa9;border-radius:4px;"></div>
<div class="t" style="left:655px;top:82.5px;height:16px;line-height:16px;font-size:11px;color:#ffffff;letter-spacing:-0.3px;width:43px;text-align:center;">Farbe</div>
<div style="left:702px;top:81px;width:63.5px;height:19px;background:#383838;border-radius:4px;"></div>
<div class="t" style="left:702px;top:82.5px;height:16px;line-height:16px;font-size:11px;color:#d8d8d8;letter-spacing:-0.15px;width:63.5px;text-align:center;">Glanzlicht</div>
<div style="left:770px;top:81px;width:42.5px;height:19px;background:#383838;border-radius:4px;"></div>
<div class="t" style="left:770px;top:82.5px;height:16px;line-height:16px;font-size:11px;color:#d8d8d8;letter-spacing:-0.15px;width:42.5px;text-align:center;">Dicke</div>
<div style="left:817px;top:81px;width:74px;height:19px;background:#383838;border-radius:4px;"></div>
<div class="t" style="left:817px;top:82.5px;height:16px;line-height:16px;font-size:11px;color:#d8d8d8;letter-spacing:0.15px;width:74px;text-align:center;">Illumination</div>
<div style="left:895px;top:81px;width:62px;height:19px;background:#383838;border-radius:4px;"></div>
<div class="t" style="left:895px;top:82.5px;height:16px;line-height:16px;font-size:11px;color:#d8d8d8;letter-spacing:-0.25px;width:62px;text-align:center;">Zuweisen</div>
<svg style="left:611px;top:106px;" width="10" height="10" viewBox="0 0 10 10"><path d="M1.4 3.4 L5 6.8 L8.6 3.4" fill="none" stroke="#d0d0d0" stroke-width="1.2" stroke-linecap="round" stroke-linejoin="round"/></svg>
<svg style="left:621px;top:102px;" width="62" height="62" viewBox="0 0 62 62"><defs><clipPath id="cpb"><rect x="1" y="1" width="60" height="60"/></clipPath>
<linearGradient id="hgb" gradientUnits="userSpaceOnUse" x1="40" y1="22" x2="24" y2="53"><stop offset="0" stop-color="#0e0c0b" stop-opacity="0.92"/><stop offset="0.55" stop-color="#14110f" stop-opacity="0.92"/><stop offset="0.8" stop-color="#2a221e" stop-opacity="0.82"/><stop offset="1" stop-color="#4a3e37" stop-opacity="0.62"/></linearGradient>
<filter id="blb" x="-10%" y="-10%" width="120%" height="120%"><feGaussianBlur stdDeviation="0.45"/></filter></defs>
<rect width="62" height="62" fill="#1c1c1c"/>
<g clip-path="url(#cpb)"><g transform="translate(1 1) scale(1.0)">
<rect width="60" height="60" fill="#878787"/>
<g fill="#4a4a4a" filter="url(#blb)"><path d="M14.3 0 L26.0 0 L0 26.0 L0 14.3 Z"/><path d="M38.6 0 L50.3 0 L0 50.3 L0 38.6 Z"/><path d="M62.900000000000006 0 L74.6 0 L0 74.6 L0 62.900000000000006 Z"/><path d="M87.2 0 L98.9 0 L0 98.9 L0 87.2 Z"/><path d="M111.5 0 L123.2 0 L0 123.2 L0 111.5 Z"/><path d="M135.8 0 L147.5 0 L0 147.5 L0 135.8 Z"/></g>
<g filter="url(#blb)">
<path d="M12.4 -1 C 11.8 7, 13.3 14, 18.3 20 C 22.3 25, 27.8 28.5, 30.3 33 C 32.3 36.5, 32.8 40, 30.8 43.3 C 28.3 46.8, 24.3 49.3, 19.3 50.2 C 23 51.8, 27 51.9, 31 51.1 C 37 49.9, 43 47, 46.3 43 C 49.3 38.5, 48.3 34, 44.8 29.5 C 40.5 24.5, 33 19, 29.5 12 C 28.2 8.5, 28.2 4, 29 -1 Z" fill="url(#hgb)"/>
<g fill="none" stroke-linecap="round">
<path d="M26 -1 C 25 10, 31.5 18.5, 38.5 25.5 C 43.5 31, 46 36, 43 41.5 C 40.5 46, 34 49, 27 50.3" stroke="#8a8580" stroke-width="0.55" opacity="0.5"/>
<path d="M23 -1 C 22 10, 28.5 19, 35.5 26 C 40.5 31.5, 43 36.5, 40 41.5 C 37.5 46, 32 48.6, 26 49.8" stroke="#6e6965" stroke-width="0.5" opacity="0.45"/>
<path d="M30.2 -1 C 29.3 8, 34 17, 41 24.5 C 46.5 31, 49.8 36, 47 42 C 44.5 46.5, 39 49, 33 50.2" stroke="#161210" stroke-width="0.8" opacity="0.8"/>
<path d="M15.5 -1 C 14.5 9, 17.5 17, 23.5 23.5 C 27.5 28, 32 31, 34 35" stroke="#000" stroke-width="2.4" opacity="0.5"/>
</g></g></g></g></svg>
<div class="t" style="left:613.5px;top:178.0px;height:16px;line-height:16px;font-size:11px;color:#ffffff;letter-spacing:0.2px;-webkit-text-stroke:0.12px #fff;">Basis-Eigenschaften</div>
<div class="t" style="left:635px;top:203.0px;height:16px;line-height:16px;font-size:11px;color:#c9c9c9;letter-spacing:-0.05px;">Name</div>
<div style="left:669px;top:201px;width:373px;height:19px;background:#1d1d1d;border-radius:4px;"></div>
<div class="t" style="left:675px;top:203.0px;height:16px;line-height:16px;font-size:11px;color:#e0e0e0;letter-spacing:0.03px;">Haar-Mat</div>
<div class="t" style="left:635px;top:224.0px;height:16px;line-height:16px;font-size:11px;color:#c9c9c9;letter-spacing:-0.5px;">Ebene</div>
<div style="left:1010px;top:222px;width:13px;height:19px;background:#3a3a3a;border-radius:6.5px;"></div>
<div style="left:669px;top:222px;width:341px;height:19px;background:#1d1d1d;border-radius:4px;"></div>
<svg style="left:1010px;top:227px;" width="13" height="8" viewBox="0 0 13 8"><g transform="translate(0.3 0)"><path d="M2.0 1.9 H10.0 L6 6.1 Z" fill="#d6d6d6"/></g></svg>
<svg style="left:1026px;top:224px;" width="15" height="15" viewBox="0 0 15 15"><path d="M1.3 13.7 L1.5 10.8 L7.5 4.8 L10.2 7.5 L4.2 13.5 Z" fill="none" stroke="#a2a2a2" stroke-width="1.15" stroke-linejoin="round"/><path d="M6.9 3.6 L11.4 8.1" stroke="#a2a2a2" stroke-width="1.5"/><path d="M9.2 4.3 L11.6 1.9 a1.65 1.65 0 0 1 2.4 2.4 L11.6 6.7 Z" fill="#a2a2a2"/></svg>
<svg style="left:612px;top:245px;" width="16" height="16" viewBox="0 0 16 16"><circle cx="8" cy="8" r="7.5" fill="#282828"/><path d="M8 3.9 L12.1 8 L8 12.1 L3.9 8 Z" fill="none" stroke="#adadad" stroke-width="1.2" stroke-linejoin="round"/></svg>
<div class="t" style="left:635px;top:245.0px;height:16px;line-height:16px;font-size:11px;color:#c9c9c9;letter-spacing:-0.45px;">Farbe</div>
<svg style="left:706px;top:247px;" width="12" height="12" viewBox="0 0 12 12"><rect width="12" height="12" rx="2.5" fill="#5b5fa9"/><path d="M2.5 6 L5.1 8.4 L9.6 3.8" fill="none" stroke="#fff" stroke-width="1.6" stroke-linecap="butt" stroke-linejoin="miter"/></svg>
<svg style="left:733px;top:245px;" width="16" height="16" viewBox="0 0 16 16"><circle cx="8" cy="8" r="7.5" fill="#282828"/><path d="M8 3.9 L12.1 8 L8 12.1 L3.9 8 Z" fill="none" stroke="#adadad" stroke-width="1.2" stroke-linejoin="round"/></svg>
<div class="t" style="left:756px;top:245.0px;height:16px;line-height:16px;font-size:11px;color:#c9c9c9;letter-spacing:-0.21px;">Rücklicht Farbe</div>
<svg style="left:835px;top:247px;" width="12" height="12" viewBox="0 0 12 12"><rect x="0.8" y="0.8" width="10.4" height="10.4" rx="2" fill="none" stroke="#7c7c7c" stroke-width="1.6"/></svg>
<svg style="left:612px;top:266px;" width="16" height="16" viewBox="0 0 16 16"><circle cx="8" cy="8" r="7.5" fill="#282828"/><path d="M8 3.9 L12.1 8 L8 12.1 L3.9 8 Z" fill="none" stroke="#adadad" stroke-width="1.2" stroke-linejoin="round"/></svg>
<div class="t" style="left:635px;top:266.0px;height:16px;line-height:16px;font-size:11px;color:#c9c9c9;letter-spacing:-0.12px;">Glanzlicht</div>
<svg style="left:706px;top:268px;" width="12" height="12" viewBox="0 0 12 12"><rect width="12" height="12" rx="2.5" fill="#5b5fa9"/><path d="M2.5 6 L5.1 8.4 L9.6 3.8" fill="none" stroke="#fff" stroke-width="1.6" stroke-linecap="butt" stroke-linejoin="miter"/></svg>
<svg style="left:733px;top:266px;" width="16" height="16" viewBox="0 0 16 16"><circle cx="8" cy="8" r="7.5" fill="#282828"/><path d="M8 3.9 L12.1 8 L8 12.1 L3.9 8 Z" fill="none" stroke="#adadad" stroke-width="1.2" stroke-linejoin="round"/></svg>
<div class="t" style="left:756px;top:266.0px;height:16px;line-height:16px;font-size:11px;color:#c9c9c9;letter-spacing:-0.3px;">Transparenz</div>
<svg style="left:835px;top:268px;" width="12" height="12" viewBox="0 0 12 12"><rect x="0.8" y="0.8" width="10.4" height="10.4" rx="2" fill="none" stroke="#7c7c7c" stroke-width="1.6"/></svg>
<svg style="left:612px;top:287px;" width="16" height="16" viewBox="0 0 16 16"><circle cx="8" cy="8" r="7.5" fill="#282828"/><path d="M8 3.9 L12.1 8 L8 12.1 L3.9 8 Z" fill="none" stroke="#adadad" stroke-width="1.2" stroke-linejoin="round"/></svg>
<div class="t" style="left:635px;top:287.0px;height:16px;line-height:16px;font-size:11px;color:#c9c9c9;letter-spacing:-0.3px;">Dicke</div>
<svg style="left:706px;top:289px;" width="12" height="12" viewBox="0 0 12 12"><rect width="12" height="12" rx="2.5" fill="#5b5fa9"/><path d="M2.5 6 L5.1 8.4 L9.6 3.8" fill="none" stroke="#fff" stroke-width="1.6" stroke-linecap="butt" stroke-linejoin="miter"/></svg>
<svg style="left:733px;top:287px;" width="16" height="16" viewBox="0 0 16 16"><circle cx="8" cy="8" r="7.5" fill="#282828"/><path d="M8 3.9 L12.1 8 L8 12.1 L3.9 8 Z" fill="none" stroke="#adadad" stroke-width="1.2" stroke-linejoin="round"/></svg>
<div class="t" style="left:756px;top:287.0px;height:16px;line-height:16px;font-size:11px;color:#c9c9c9;letter-spacing:-0.3px;">Länge</div>
<svg style="left:835px;top:289px;" width="12" height="12" viewBox="0 0 12 12"><rect x="0.8" y="0.8" width="10.4" height="10.4" rx="2" fill="none" stroke="#7c7c7c" stroke-width="1.6"/></svg>
<svg style="left:612px;top:308px;" width="16" height="16" viewBox="0 0 16 16"><circle cx="8" cy="8" r="7.5" fill="#282828"/><path d="M8 3.9 L12.1 8 L8 12.1 L3.9 8 Z" fill="none" stroke="#adadad" stroke-width="1.2" stroke-linejoin="round"/></svg>
<div class="t" style="left:635px;top:308.0px;height:16px;line-height:16px;font-size:11px;color:#c9c9c9;letter-spacing:-0.3px;">Größe</div>
<svg style="left:706px;top:310px;" width="12" height="12" viewBox="0 0 12 12"><rect x="0.8" y="0.8" width="10.4" height="10.4" rx="2" fill="none" stroke="#7c7c7c" stroke-width="1.6"/></svg>
<svg style="left:733px;top:308px;" width="16" height="16" viewBox="0 0 16 16"><circle cx="8" cy="8" r="7.5" fill="#282828"/><path d="M8 3.9 L12.1 8 L8 12.1 L3.9 8 Z" fill="none" stroke="#adadad" stroke-width="1.2" stroke-linejoin="round"/></svg>
<div class="t" style="left:756px;top:308.0px;height:16px;line-height:16px;font-size:11px;color:#c9c9c9;letter-spacing:-0.3px;">Kräuseln</div>
<svg style="left:835px;top:310px;" width="12" height="12" viewBox="0 0 12 12"><rect x="0.8" y="0.8" width="10.4" height="10.4" rx="2" fill="none" stroke="#7c7c7c" stroke-width="1.6"/></svg>
<svg style="left:612px;top:329px;" width="16" height="16" viewBox="0 0 16 16"><circle cx="8" cy="8" r="7.5" fill="#282828"/><path d="M8 3.9 L12.1 8 L8 12.1 L3.9 8 Z" fill="none" stroke="#adadad" stroke-width="1.2" stroke-linejoin="round"/></svg>
<div class="t" style="left:635px;top:329.0px;height:16px;line-height:16px;font-size:11px;color:#c9c9c9;letter-spacing:-0.3px;">Knicken</div>
<svg style="left:706px;top:331px;" width="12" height="12" viewBox="0 0 12 12"><rect x="0.8" y="0.8" width="10.4" height="10.4" rx="2" fill="none" stroke="#7c7c7c" stroke-width="1.6"/></svg>
<svg style="left:733px;top:329px;" width="16" height="16" viewBox="0 0 16 16"><circle cx="8" cy="8" r="7.5" fill="#282828"/><path d="M8 3.9 L12.1 8 L8 12.1 L3.9 8 Z" fill="none" stroke="#adadad" stroke-width="1.2" stroke-linejoin="round"/></svg>
<div class="t" style="left:756px;top:329.0px;height:16px;line-height:16px;font-size:11px;color:#c9c9c9;letter-spacing:0.03px;">Dichte</div>
<svg style="left:835px;top:331px;" width="12" height="12" viewBox="0 0 12 12"><rect x="0.8" y="0.8" width="10.4" height="10.4" rx="2" fill="none" stroke="#7c7c7c" stroke-width="1.6"/></svg>
<svg style="left:612px;top:350px;" width="16" height="16" viewBox="0 0 16 16"><circle cx="8" cy="8" r="7.5" fill="#282828"/><path d="M8 3.9 L12.1 8 L8 12.1 L3.9 8 Z" fill="none" stroke="#adadad" stroke-width="1.2" stroke-linejoin="round"/></svg>
<div class="t" style="left:635px;top:350.0px;height:16px;line-height:16px;font-size:11px;color:#c9c9c9;letter-spacing:-0.4px;">Büschel</div>
<svg style="left:706px;top:352px;" width="12" height="12" viewBox="0 0 12 12"><rect x="0.8" y="0.8" width="10.4" height="10.4" rx="2" fill="none" stroke="#7c7c7c" stroke-width="1.6"/></svg>
<svg style="left:733px;top:350px;" width="16" height="16" viewBox="0 0 16 16"><circle cx="8" cy="8" r="7.5" fill="#282828"/><path d="M8 3.9 L12.1 8 L8 12.1 L3.9 8 Z" fill="none" stroke="#adadad" stroke-width="1.2" stroke-linejoin="round"/></svg>
<div class="t" style="left:756px;top:350.0px;height:16px;line-height:16px;font-size:11px;color:#c9c9c9;letter-spacing:-0.14px;">Spannung</div>
<svg style="left:835px;top:352px;" width="12" height="12" viewBox="0 0 12 12"><rect x="0.8" y="0.8" width="10.4" height="10.4" rx="2" fill="none" stroke="#7c7c7c" stroke-width="1.6"/></svg>
<svg style="left:612px;top:371px;" width="16" height="16" viewBox="0 0 16 16"><circle cx="8" cy="8" r="7.5" fill="#282828"/><path d="M8 3.9 L12.1 8 L8 12.1 L3.9 8 Z" fill="none" stroke="#adadad" stroke-width="1.2" stroke-linejoin="round"/></svg>
<div class="t" style="left:635px;top:371.0px;height:16px;line-height:16px;font-size:11px;color:#c9c9c9;letter-spacing:-0.09px;">Displacement</div>
<svg style="left:706px;top:373px;" width="12" height="12" viewBox="0 0 12 12"><rect x="0.8" y="0.8" width="10.4" height="10.4" rx="2" fill="none" stroke="#7c7c7c" stroke-width="1.6"/></svg>
<svg style="left:733px;top:371px;" width="16" height="16" viewBox="0 0 16 16"><circle cx="8" cy="8" r="7.5" fill="#282828"/><path d="M8 3.9 L12.1 8 L8 12.1 L3.9 8 Z" fill="none" stroke="#adadad" stroke-width="1.2" stroke-linejoin="round"/></svg>
<div class="t" style="left:756px;top:371.0px;height:16px;line-height:16px;font-size:11px;color:#c9c9c9;letter-spacing:-0.22px;">Biegen</div>
<svg style="left:835px;top:373px;" width="12" height="12" viewBox="0 0 12 12"><rect x="0.8" y="0.8" width="10.4" height="10.4" rx="2" fill="none" stroke="#7c7c7c" stroke-width="1.6"/></svg>
<svg style="left:612px;top:392px;" width="16" height="16" viewBox="0 0 16 16"><circle cx="8" cy="8" r="7.5" fill="#282828"/><path d="M8 3.9 L12.1 8 L8 12.1 L3.9 8 Z" fill="none" stroke="#adadad" stroke-width="1.2" stroke-linejoin="round"/></svg>
<div class="t" style="left:635px;top:392.0px;height:16px;line-height:16px;font-size:11px;color:#c9c9c9;letter-spacing:-0.22px;">Locken</div>
<svg style="left:706px;top:394px;" width="12" height="12" viewBox="0 0 12 12"><rect x="0.8" y="0.8" width="10.4" height="10.4" rx="2" fill="none" stroke="#7c7c7c" stroke-width="1.6"/></svg>
<svg style="left:733px;top:392px;" width="16" height="16" viewBox="0 0 16 16"><circle cx="8" cy="8" r="7.5" fill="#282828"/><path d="M8 3.9 L12.1 8 L8 12.1 L3.9 8 Z" fill="none" stroke="#adadad" stroke-width="1.2" stroke-linejoin="round"/></svg>
<div class="t" style="left:756px;top:392.0px;height:16px;line-height:16px;font-size:11px;color:#c9c9c9;letter-spacing:-0.16px;">Verdrehen</div>
<svg style="left:835px;top:394px;" width="12" height="12" viewBox="0 0 12 12"><rect x="0.8" y="0.8" width="10.4" height="10.4" rx="2" fill="none" stroke="#7c7c7c" stroke-width="1.6"/></svg>
<svg style="left:612px;top:413px;" width="16" height="16" viewBox="0 0 16 16"><circle cx="8" cy="8" r="7.5" fill="#282828"/><path d="M8 3.9 L12.1 8 L8 12.1 L3.9 8 Z" fill="none" stroke="#adadad" stroke-width="1.2" stroke-linejoin="round"/></svg>
<div class="t" style="left:635px;top:413.0px;height:16px;line-height:16px;font-size:11px;color:#c9c9c9;letter-spacing:-0.13px;">Wellen</div>
<svg style="left:706px;top:415px;" width="12" height="12" viewBox="0 0 12 12"><rect x="0.8" y="0.8" width="10.4" height="10.4" rx="2" fill="none" stroke="#7c7c7c" stroke-width="1.6"/></svg>
<svg style="left:733px;top:413px;" width="16" height="16" viewBox="0 0 16 16"><circle cx="8" cy="8" r="7.5" fill="#282828"/><path d="M8 3.9 L12.1 8 L8 12.1 L3.9 8 Z" fill="none" stroke="#adadad" stroke-width="1.2" stroke-linejoin="round"/></svg>
<div class="t" style="left:756px;top:413.0px;height:16px;line-height:16px;font-size:11px;color:#c9c9c9;letter-spacing:-0.09px;">Glätten</div>
<svg style="left:835px;top:415px;" width="12" height="12" viewBox="0 0 12 12"><rect x="0.8" y="0.8" width="10.4" height="10.4" rx="2" fill="none" stroke="#7c7c7c" stroke-width="1.6"/></svg>
<div style="left:610px;top:284px;width:243px;height:148px;border:2px solid #f8f518;border-radius:1px;"></div>
<div class="t" style="left:613px;top:444.0px;height:16px;line-height:16px;font-size:11px;color:#ffffff;letter-spacing:0.1px;-webkit-text-stroke:0.12px #fff;">Farbe</div>
<svg style="left:612px;top:469px;" width="16" height="16" viewBox="0 0 16 16"><circle cx="8" cy="8" r="7.5" fill="#282828"/><path d="M8 3.9 L12.1 8 L8 12.1 L3.9 8 Z" fill="none" stroke="#adadad" stroke-width="1.2" stroke-linejoin="round"/></svg>
<div class="t" style="left:635px;top:469.0px;height:16px;line-height:16px;font-size:11px;color:#c9c9c9;letter-spacing:-0.5px;">Farbe</div>
<svg style="left:676px;top:471px;" width="9" height="11" viewBox="0 0 9 11"><g transform="translate(0.1 0.8)"><path d="M2.1 1.5 L5.8 5 L2.1 8.5" fill="none" stroke="#d6d6d6" stroke-width="1.3" stroke-linecap="butt" stroke-linejoin="miter"/></g></svg>
<div style="left:697px;top:469px;width:332px;height:30px;background:linear-gradient(90deg,#33281f 0%,#382c22 18%,#514134 50%,#624f3d 80%,#66523f 100%);box-shadow:inset 0 0 0 1px rgba(20,16,14,0.45);"></div>
<svg style="left:858px;top:478px;" width="11" height="11" viewBox="0 0 11 11"><g transform="translate(0.5 0.6)"><circle cx="5" cy="5" r="3.6" fill="#fff" stroke="#1a1a1a" stroke-width="1"/></g></svg>
<svg style="left:692px;top:498px;" width="13" height="19" viewBox="0 0 13 19"><g transform="translate(0.6 0.8)"><path d="M6 0.3 L11.2 6.6 H0.8 Z" fill="#9a9a9a"/><rect x="0.5" y="6.3" width="11" height="11" rx="0.8" fill="#8e8e8e"/><rect x="1.45" y="7.25" width="9.1" height="9.1" fill="#141414"/><rect x="2.5" y="8.3" width="7" height="7" fill="#33281f"/></g></svg>
<svg style="left:1022px;top:498px;" width="13" height="19" viewBox="0 0 13 19"><g transform="translate(0.5 0.8)"><path d="M6 0.3 L11.2 6.6 H0.8 Z" fill="#9a9a9a"/><rect x="0.5" y="6.3" width="11" height="11" rx="0.8" fill="#8e8e8e"/><rect x="1.45" y="7.25" width="9.1" height="9.1" fill="#141414"/><rect x="2.5" y="8.3" width="7" height="7" fill="#67523f"/></g></svg>
<div style="left:685px;top:522px;width:85.5px;height:19px;background:#3c3c3c;border-radius:9.5px;"></div>
<div class="t" style="left:685px;top:523.5px;height:16px;line-height:16px;font-size:11px;color:#e4e4e4;letter-spacing:-0.32px;width:85.5px;text-align:center;">Preset laden...</div>
<div style="left:773px;top:522px;width:105.5px;height:19px;background:#3c3c3c;border-radius:9.5px;"></div>
<div class="t" style="left:773px;top:523.5px;height:16px;line-height:16px;font-size:11px;color:#e4e4e4;letter-spacing:-0.3px;width:105.5px;text-align:center;">Preset speichern...</div>
<svg style="left:612px;top:549px;" width="16" height="16" viewBox="0 0 16 16"><circle cx="8" cy="8" r="7.5" fill="#282828"/><path d="M8 3.9 L12.1 8 L8 12.1 L3.9 8 Z" fill="none" stroke="#adadad" stroke-width="1.2" stroke-linejoin="round"/></svg>
<div class="t" style="left:635px;top:549.0px;height:16px;line-height:16px;font-size:11px;color:#c9c9c9;letter-spacing:0.1px;">Helligkeit</div>
<div style="left:685px;top:548px;width:76px;height:19px;background:#1d1d1d;border-radius:4px;"></div>
<div class="t" style="left:685px;top:550.0px;height:16px;line-height:16px;font-size:11px;color:#e8e8e8;letter-spacing:-0.3px;width:76px;text-align:center;">100 %</div>
<div style="left:765px;top:554.5px;width:272px;height:4px;background:#5b5fa9;border-radius:2px;"></div>
<svg style="left:1031px;top:551px;" width="12" height="12" viewBox="0 0 12 12"><g transform="translate(0.5 0.5)"><circle cx="5.5" cy="5.5" r="5.2" fill="#5b5fa9"/></g></svg>
<div class="t" style="left:635px;top:580.0px;height:16px;line-height:16px;font-size:11px;color:#d4d4d4;letter-spacing:-0.2px;">Textur</div>
<div style="left:685px;top:578px;width:20px;height:19px;background:#3c3c3c;border-radius:9.5px;"></div>
<svg style="left:689px;top:583px;" width="12" height="9" viewBox="0 0 12 9"><g transform="translate(0 0.3)"><path d="M2.3 1.9 H9.7 L6 6.1 Z" fill="#e0e0e0"/></g></svg>
<div style="left:709px;top:578px;width:292.5px;height:19px;background:#3c3c3c;border-radius:9.5px;"></div>
<svg style="left:1006px;top:581px;" width="15" height="12" viewBox="0 0 15 12"><g transform="translate(0.5 0)"><path d="M2.4 2.9 V10.4 H12.5 V2.9 H6.9 L5.9 1.7 H2.9 L2.4 2.9 Z" fill="none" stroke="#b0b0b0" stroke-width="1.1" stroke-linejoin="round"/></g></svg>
<svg style="left:1027px;top:580px;" width="14" height="14" viewBox="0 0 14 14"><g transform="translate(0.5 0.5)"><path d="M1.7 3.8 V11.9 H11.3 V3.8" fill="none" stroke="#b0b0b0" stroke-width="1.1" stroke-linejoin="round"/><rect x="0.9" y="1.3" width="11.2" height="2.5" rx="0.8" fill="none" stroke="#b0b0b0" stroke-width="1.1"/><path d="M4.6 7 H8.6" stroke="#b0b0b0" stroke-width="1.3"/></g></svg>
<svg style="left:612px;top:603px;" width="16" height="16" viewBox="0 0 16 16"><path d="M8 3.9 L12.1 8 L8 12.1 L3.9 8 Z" fill="none" stroke="#484848" stroke-width="1.2" stroke-linejoin="round"/></svg>
<div class="t" style="left:635px;top:603.0px;height:16px;line-height:16px;font-size:11px;color:#6a6a6a;letter-spacing:-0.05px;">Mischmodus</div>
<div style="left:701px;top:601px;width:129px;height:19px;background:#303030;border-radius:4px;"></div>
<div class="t" style="left:709px;top:603.0px;height:16px;line-height:16px;font-size:11px;color:#6a6a6a;letter-spacing:-0.1px;">Normal</div>
<svg style="left:814px;top:606px;" width="12" height="9" viewBox="0 0 12 9"><g transform="translate(0 0.5)"><path d="M2.3 1.9 H9.7 L6 6.1 Z" fill="#555555"/></g></svg>
<svg style="left:831px;top:603px;" width="16" height="16" viewBox="0 0 16 16"><path d="M8 3.9 L12.1 8 L8 12.1 L3.9 8 Z" fill="none" stroke="#484848" stroke-width="1.2" stroke-linejoin="round"/></svg>
<div class="t" style="left:854.5px;top:603.0px;height:16px;line-height:16px;font-size:11px;color:#6a6a6a;letter-spacing:-0.2px;">Mischen</div>
<div style="left:899px;top:601px;width:75.5px;height:19px;background:#252525;border-radius:4px;"></div>
<div class="t" style="left:899px;top:603.0px;height:16px;line-height:16px;font-size:11px;color:#7e7e7e;width:75.5px;text-align:center;">100 %</div>
<div style="left:978px;top:609px;width:59px;height:4px;background:#33355c;border-radius:2px;"></div>
<svg style="left:1031px;top:606px;" width="12" height="11" viewBox="0 0 12 11"><g transform="translate(0.5 0)"><circle cx="5.5" cy="5.5" r="5.2" fill="#33355c"/></g></svg>
<div class="t" style="left:621px;top:640.0px;height:16px;line-height:16px;font-size:11px;color:#c9c9c9;letter-spacing:-0.3px;">Var:</div>
<svg style="left:642px;top:640px;" width="16" height="16" viewBox="0 0 16 16"><circle cx="8" cy="8" r="7.5" fill="#282828"/><path d="M8 3.9 L12.1 8 L8 12.1 L3.9 8 Z" fill="none" stroke="#adadad" stroke-width="1.2" stroke-linejoin="round"/></svg>
<div class="t" style="left:665px;top:640.0px;height:16px;line-height:16px;font-size:11px;color:#c9c9c9;">H</div>
<div style="left:677px;top:638px;width:76px;height:19px;background:#1d1d1d;border-radius:4px;"></div>
<div class="t" style="left:677px;top:640.0px;height:16px;line-height:16px;font-size:11px;color:#e8e8e8;width:76px;text-align:center;">0 %</div>
<svg style="left:754px;top:640px;" width="16" height="16" viewBox="0 0 16 16"><circle cx="8" cy="8" r="7.5" fill="#282828"/><path d="M8 3.9 L12.1 8 L8 12.1 L3.9 8 Z" fill="none" stroke="#adadad" stroke-width="1.2" stroke-linejoin="round"/></svg>
<div class="t" style="left:776.5px;top:640.0px;height:16px;line-height:16px;font-size:11px;color:#c9c9c9;">S</div>
<div style="left:786.5px;top:638px;width:76px;height:19px;background:#1d1d1d;border-radius:4px;"></div>
<div class="t" style="left:786.5px;top:640.0px;height:16px;line-height:16px;font-size:11px;color:#e8e8e8;width:76px;text-align:center;">0 %</div>
<svg style="left:863px;top:640px;" width="17" height="16" viewBox="0 0 17 16"><g transform="translate(0.8 0)"><circle cx="8" cy="8" r="7.5" fill="#282828"/><path d="M8 3.9 L12.1 8 L8 12.1 L3.9 8 Z" fill="none" stroke="#adadad" stroke-width="1.2" stroke-linejoin="round"/></g></svg>
<div class="t" style="left:886.5px;top:640.0px;height:16px;line-height:16px;font-size:11px;color:#c9c9c9;">V</div>
<div style="left:898px;top:638px;width:76px;height:19px;background:#1d1d1d;border-radius:4px;"></div>
<div class="t" style="left:898px;top:640.0px;height:16px;line-height:16px;font-size:11px;color:#e8e8e8;width:76px;text-align:center;">0 %</div>
<div style="left:611px;top:668px;width:431px;height:1px;background:#1e1e1e;"></div>
<div style="left:611px;top:693px;width:431px;height:1px;background:#1e1e1e;"></div>
<div style="left:611px;top:721px;width:431px;height:1px;background:#1e1e1e;"></div>
<div style="left:611px;top:749px;width:431px;height:1px;background:#1e1e1e;"></div>
<svg style="left:621px;top:674px;" width="9" height="11" viewBox="0 0 9 11"><g transform="translate(0.2 0.5)"><path d="M2.1 1.5 L5.8 5 L2.1 8.5" fill="none" stroke="#dedede" stroke-width="1.2" stroke-linecap="butt" stroke-linejoin="miter"/></g></svg>
<div class="t" style="left:635px;top:674.0px;height:16px;line-height:16px;font-size:10px;color:#dcdcdc;font-weight:700;letter-spacing:-0.35px;">WURZELN</div>
<svg style="left:621px;top:702px;" width="9" height="11" viewBox="0 0 9 11"><g transform="translate(0.2 0.5)"><path d="M2.1 1.5 L5.8 5 L2.1 8.5" fill="none" stroke="#dedede" stroke-width="1.2" stroke-linecap="butt" stroke-linejoin="miter"/></g></svg>
<div class="t" style="left:635px;top:702.0px;height:16px;line-height:16px;font-size:10px;color:#dcdcdc;font-weight:700;letter-spacing:-0.3px;">SPITZEN</div>
<svg style="left:621px;top:730px;" width="9" height="11" viewBox="0 0 9 11"><g transform="translate(0.2 0.5)"><path d="M2.1 1.5 L5.8 5 L2.1 8.5" fill="none" stroke="#dedede" stroke-width="1.2" stroke-linecap="butt" stroke-linejoin="miter"/></g></svg>
<div class="t" style="left:635px;top:730.0px;height:16px;line-height:16px;font-size:10px;color:#dcdcdc;font-weight:700;letter-spacing:-0.67px;">FÄRBEN</div>
<svg style="left:621px;top:758px;" width="9" height="11" viewBox="0 0 9 11"><g transform="translate(0.2 0.5)"><path d="M2.1 1.5 L5.8 5 L2.1 8.5" fill="none" stroke="#dedede" stroke-width="1.2" stroke-linecap="butt" stroke-linejoin="miter"/></g></svg>
<div class="t" style="left:635px;top:758.0px;height:16px;line-height:16px;font-size:10px;color:#dcdcdc;font-weight:700;letter-spacing:-0.72px;">OBERFLÄCHE</div>
</div></body></html>
